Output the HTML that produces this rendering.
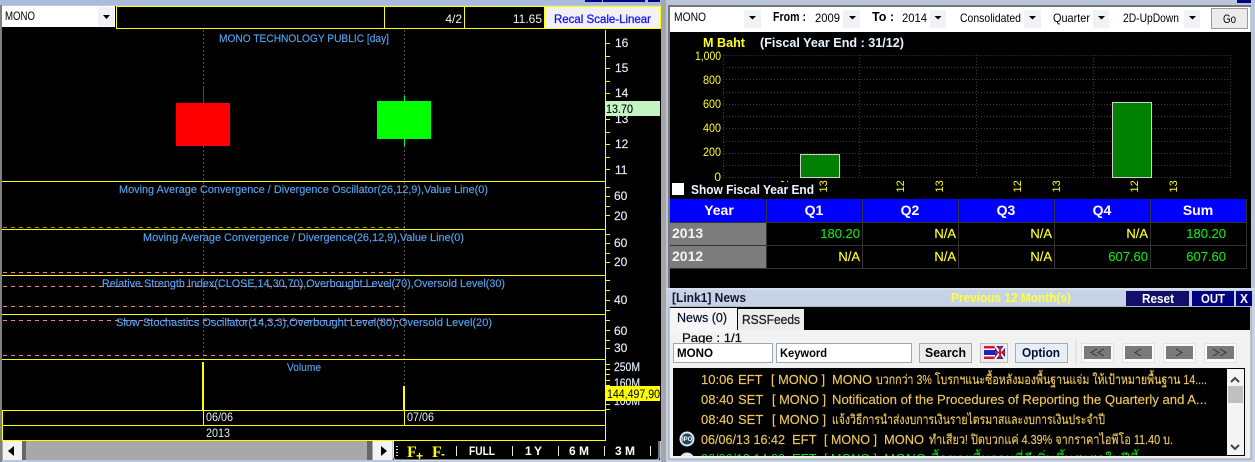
<!DOCTYPE html>
<html><head><meta charset="utf-8"><title>MONO</title>
<style>
html,body{margin:0;padding:0;background:#b9c6dc;width:1255px;height:462px;overflow:hidden}
svg{display:block;position:absolute;left:0;top:0}
text{font-family:"Liberation Sans","Noto Sans CJK SC",sans-serif;white-space:pre}
.lb{font-size:11px;fill:#55a0f0;stroke:#55a0f0;stroke-width:.15}
.ax{font-size:12px;fill:#e4eef8;stroke:#e4eef8;stroke-width:.15}
.cb{font-size:12px;fill:#000}
.bd{font-size:13px;font-weight:bold;fill:#000}
.hd{font-size:14px;font-weight:bold;fill:#fff;text-anchor:middle}
.v{font-size:13px;text-anchor:end;stroke-width:.15}
.y{fill:#ffff20;stroke:#ffff20}.g{fill:#10e010;stroke:#10e010}
.n{font-size:13px;fill:#eec85c;stroke:#eec85c;stroke-width:.15}
.yt{font-size:12px;fill:#ffff20;text-anchor:end}
.tb{font-size:12px;font-weight:bold;fill:#fff}
.r{font-size:11px;fill:#ffff20}
</style></head><body>
<svg width="1255" height="462" viewBox="0 0 1255 462" xmlns="http://www.w3.org/2000/svg">
<defs><clipPath id="lst"><rect x="673" y="368" width="554" height="88"/></clipPath></defs>
<rect width="1255" height="462" fill="#b9c6dc"/>
<rect x="0" y="0" width="2" height="462" fill="#808080"/>
<rect x="661" y="0" width="5" height="462" fill="#a6a6a6"/>
<rect x="0" y="0" width="661" height="5" fill="#a9bcdc"/>
<rect x="585" y="0" width="17" height="2" fill="#000080"/><rect x="603" y="0" width="42" height="2" fill="#000080"/><rect x="648" y="0" width="12" height="2" fill="#000080"/>
<rect x="1237" y="0" width="14" height="3" fill="#000080"/>

<!-- LEFT PANEL -->
<rect x="2" y="6" width="659" height="435" fill="#000"/>
<rect x="2" y="6" width="113" height="21" fill="#fff"/>
<rect x="98" y="7" width="16" height="19" fill="#f0f1f5"/>
<path d="M103 15h7l-3.500 4z" fill="#000"/>
<text x="5" y="20" class="cb" textLength="30" lengthAdjust="spacingAndGlyphs">MONO</text>
<rect x="116.500" y="6.500" width="544" height="22" fill="#000" stroke="#ffff00"/>
<path d="M384.500 7v21M464.500 7v21M544.500 7v21" stroke="#ffff00"/>
<text x="462" y="23" text-anchor="end" font-size="12" fill="#eef2f6">4/2</text>
<text x="542" y="23" text-anchor="end" font-size="12" fill="#eef2f6">11.65</text>
<rect x="545" y="7" width="115" height="21" fill="#f2f2f6"/>
<text x="554" y="23" font-size="12" fill="#1414f0" stroke="#1414f0" stroke-width=".3" textLength="97" lengthAdjust="spacingAndGlyphs">Recal Scale-Linear</text>
<text x="219" y="42" class="lb" textLength="170" lengthAdjust="spacingAndGlyphs">MONO TECHNOLOGY PUBLIC [day]</text>

<path d="M203.500 30V362M404.500 30V386" stroke="#555" stroke-dasharray="2 2"/>
<path d="M203.500 88v15" stroke="#ff0000"/>
<rect x="176" y="103" width="54" height="43" fill="#ff0000"/>
<path d="M404.500 96v5M404.500 139v7" stroke="#00ff00"/>
<rect x="377" y="101" width="54" height="38" fill="#00ff00"/>

<!-- panel lines -->
<path d="M2 181.500H605M2 229.500H605M2 275.500H605M2 314.500H605M2 359.500H605" stroke="#ffff00"/>
<path d="M2 410.500H605M2 425.500H605M2 440.500H605M2.500 410v31M203.500 410v15M404.500 410v15M605.500 30V441" stroke="#ffff00" fill="none"/>
<path d="M3 227.500H405" stroke="#9a9a00" stroke-dasharray="4 4"/>
<path d="M3 272.500H405M3 286.500H405M3 306.500H405M3 320.500H405M3 355.500H405" stroke="#ff7f7f" stroke-dasharray="4 4"/>
<text x="119" y="193" class="lb" textLength="369" lengthAdjust="spacingAndGlyphs">Moving Average Convergence / Divergence Oscillator(26,12,9),Value Line(0)</text>
<text x="143" y="241" class="lb" textLength="321" lengthAdjust="spacingAndGlyphs">Moving Average Convergence / Divergence(26,12,9),Value Line(0)</text>
<text x="102" y="287" class="lb" textLength="403" lengthAdjust="spacingAndGlyphs">Relative Strength Index(CLOSE,14,30,70),Overbought Level(70),Oversold Level(30)</text>
<text x="116" y="326" class="lb" textLength="376" lengthAdjust="spacingAndGlyphs">Slow Stochastics Oscillator(14,3,3),Overbought Level(80),Oversold Level(20)</text>
<text x="287" y="371" class="lb" textLength="34" lengthAdjust="spacingAndGlyphs">Volume</text>
<rect x="202" y="362" width="2" height="48" fill="#ffff00"/>
<rect x="403" y="386" width="2" height="24" fill="#ffff00"/>
<text x="206" y="421" font-size="12" fill="#e0ecf8" textLength="27" lengthAdjust="spacingAndGlyphs">06/06</text>
<text x="407" y="421" font-size="12" fill="#e0ecf8" textLength="27" lengthAdjust="spacingAndGlyphs">07/06</text>
<text x="206" y="437" font-size="12" fill="#e0ecf8" textLength="24" lengthAdjust="spacingAndGlyphs">2013</text>

<!-- axis -->
<path d="M606 43.500h4M606 56.500h4M606 68.500h4M606 81.500h4M606 93.500h4M606 119.500h4M606 132.500h4M606 144.500h4M606 157.500h4M606 169.500h4M606 187.500h4M606 196.500h4M606 206.500h4M606 215.500h4M606 234.500h4M606 243.500h4M606 253.500h4M606 262.500h4M606 280.500h4M606 290.500h4M606 300.500h4M606 310.500h4M606 320.500h4M606 330.500h4M606 340.500h4M606 348.500h4M606 364.500h4M606 369.500h4M606 374.500h4M606 380.500h4M606 385.500h4M606 404.500h4M606 409.500h4" stroke="#ffff00"/>
<text x="615" y="47" class="ax">16</text><text x="615" y="72" class="ax">15</text><text x="615" y="97" class="ax">14</text>
<text x="615" y="123" class="ax">13</text><text x="615" y="148" class="ax">12</text><text x="615" y="174" class="ax">11</text>
<text x="614" y="200" class="ax">60</text><text x="614" y="220" class="ax">20</text>
<text x="614" y="247" class="ax">60</text><text x="614" y="266" class="ax">20</text>
<text x="614" y="304" class="ax">40</text>
<text x="614" y="335" class="ax">60</text><text x="614" y="352" class="ax">30</text>
<text x="614" y="371" class="ax" textLength="26" lengthAdjust="spacingAndGlyphs">250M</text><text x="614" y="387" class="ax" textLength="26" lengthAdjust="spacingAndGlyphs">160M</text>
<text x="614" y="405" class="ax" textLength="26" lengthAdjust="spacingAndGlyphs">100M</text>
<rect x="606" y="101" width="54" height="15" fill="#c4f4c4"/>
<text x="606" y="113" font-size="12" fill="#000" stroke="#000" stroke-width=".1" textLength="27" lengthAdjust="spacingAndGlyphs">13.70</text>
<rect x="606" y="386" width="54" height="15" fill="#ffff00"/>
<text x="607" y="398" font-size="12" fill="#000" textLength="53" lengthAdjust="spacingAndGlyphs">144,497,90</text>

<!-- scrollbar + toolbar -->
<rect x="2" y="441" width="390" height="19" fill="#a8a8a8"/>
<rect x="3" y="441" width="19" height="19" fill="#f2f2f2"/>
<rect x="22" y="441" width="4" height="19" fill="#666"/>
<path d="M14 446v10l-6-5z" fill="#000"/>
<rect x="367" y="441" width="5" height="19" fill="#666"/>
<rect x="373" y="441" width="19" height="19" fill="#f2f2f2"/>
<path d="M381 446v10l6-5z" fill="#000"/>
<rect x="393" y="441" width="267" height="19" fill="#000"/>
<path d="M393.500 441v16q0 3 3 3H656q3 0 3-3V441" fill="none" stroke="#e8e8e8"/>
<path d="M397 446v1M397 449v1M397 452v1M397 455v1" stroke="#ddd" stroke-width="2"/>
<text x="407" y="457" style="font-family:'Liberation Serif',serif;font-size:16px;font-weight:bold;fill:#ffff00">F</text><text x="416" y="460" style="font-size:12px;font-weight:bold;fill:#ffff00">+</text>
<text x="432" y="457" style="font-family:'Liberation Serif',serif;font-size:16px;font-weight:bold;fill:#ffff00">F</text><text x="441" y="458" style="font-size:12px;font-weight:bold;fill:#ffff00">-</text>
<path d="M456.500 446v10M512.500 446v10M558.500 446v10M604.500 446v10M650.500 446v10" stroke="#e8e8e8"/>
<text x="469" y="455" class="tb" textLength="26" lengthAdjust="spacingAndGlyphs">FULL</text>
<text x="525" y="455" class="tb" textLength="17" lengthAdjust="spacing">1 Y</text>
<text x="569" y="455" class="tb" textLength="20" lengthAdjust="spacing">6 M</text>
<text x="615" y="455" class="tb" textLength="20" lengthAdjust="spacing">3 M</text>

<!-- RIGHT PANEL -->
<rect x="669" y="5" width="582" height="2" fill="#777"/>
<rect x="668" y="5" width="2" height="283" fill="#777"/>
<rect x="670" y="7" width="580" height="25" fill="#fff"/>
<g fill="#f1f2f6">
<rect x="744" y="10" width="17" height="18"/><rect x="843" y="10" width="17" height="18"/><rect x="930" y="10" width="16" height="18"/>
<rect x="1024" y="10" width="17" height="18"/><rect x="1093" y="10" width="16" height="18"/><rect x="1184" y="10" width="16" height="18"/></g>
<path d="M749 16h7l-3.500 3.500zM849 16h7l-3.500 3.500zM934.500 16h7l-3.500 3.500zM1029 16h7l-3.500 3.500zM1098 16h7l-3.500 3.500zM1189 16h7l-3.500 3.500z" fill="#000"/>
<text x="674" y="21" class="cb" textLength="32" lengthAdjust="spacingAndGlyphs">MONO</text>
<text x="773" y="21" class="bd" textLength="33" lengthAdjust="spacingAndGlyphs">From :</text>
<text x="815" y="22" class="cb" textLength="25" lengthAdjust="spacingAndGlyphs">2009</text>
<text x="872" y="21" class="bd" textLength="22" lengthAdjust="spacingAndGlyphs">To :</text>
<text x="902" y="22" class="cb" textLength="25" lengthAdjust="spacingAndGlyphs">2014</text>
<text x="960" y="22" class="cb" textLength="61" lengthAdjust="spacingAndGlyphs">Consolidated</text>
<text x="1053" y="22" class="cb" textLength="37" lengthAdjust="spacingAndGlyphs">Quarter</text>
<text x="1123" y="22" class="cb" textLength="56" lengthAdjust="spacingAndGlyphs">2D-UpDown</text>
<rect x="1211.500" y="8.500" width="36" height="20" fill="#ebebeb" stroke="#999"/>
<text x="1223" y="23" class="cb" textLength="13" lengthAdjust="spacingAndGlyphs">Go</text>

<rect x="670" y="32" width="581" height="256" fill="#000"/>
<text x="703" y="47" font-size="13" font-weight="bold" fill="#ffff20" textLength="42" lengthAdjust="spacingAndGlyphs">M Baht</text>
<text x="760" y="47" font-size="13" font-weight="bold" fill="#e8f4ff" textLength="144" lengthAdjust="spacingAndGlyphs">(Fiscal Year End : 31/12)</text>
<text x="721" y="60" class="yt" textLength="26" lengthAdjust="spacingAndGlyphs">1,000</text><text x="721" y="84" class="yt" textLength="18" lengthAdjust="spacingAndGlyphs">800</text><text x="721" y="108" class="yt" textLength="18" lengthAdjust="spacingAndGlyphs">600</text>
<text x="721" y="132" class="yt" textLength="18" lengthAdjust="spacingAndGlyphs">400</text><text x="721" y="156" class="yt" textLength="18" lengthAdjust="spacingAndGlyphs">200</text><text x="721" y="181" class="yt">0</text>
<path d="M723.500 55.500H1231M723 67.500H1231M723 79.500H1231M723 92.500H1231M723 104.500H1231M723 116.500H1231M723 128.500H1231M723 141.500H1231M723 153.500H1231M723 165.500H1231M723 177.500H1231M723.500 55V178M859.500 55V178M976.500 55V178M1093.500 55V178M1230.500 55V178" stroke="#3c3c3c" stroke-dasharray="1 2" fill="none"/>
<rect x="800.500" y="154.500" width="39" height="23" fill="#008000" stroke="#d0d0d0"/>
<rect x="1112.500" y="102.500" width="39" height="75" fill="#008000" stroke="#d0d0d0"/>
<text transform="translate(827,192.500) rotate(-90)" class="r">13</text>
<text transform="translate(788,192.500) rotate(-90)" class="r">12</text>
<text transform="translate(904,192.500) rotate(-90)" class="r">12</text>
<text transform="translate(943,192.500) rotate(-90)" class="r">13</text>
<text transform="translate(1021,192.500) rotate(-90)" class="r">12</text>
<text transform="translate(1060,192.500) rotate(-90)" class="r">13</text>
<text transform="translate(1138,192.500) rotate(-90)" class="r">12</text>
<text transform="translate(1177,192.500) rotate(-90)" class="r">13</text>
<rect x="670" y="182" width="145" height="16" fill="#000"/>
<rect x="672" y="183" width="12" height="12" fill="#fff"/>
<text x="691" y="194" font-size="13" font-weight="bold" fill="#eef4ff" textLength="123" lengthAdjust="spacingAndGlyphs">Show Fiscal Year End</text>

<!-- table -->
<rect x="670" y="199" width="576" height="23" fill="#0000ff"/>
<rect x="670" y="223" width="96" height="45" fill="#7c7c7c"/>
<path d="M766.500 199V269M862.500 199V269M958.500 199V269M1054.500 199V269M1150.500 199V269M1246.500 199V269M670 222.500H1247M670 245.500H1247M670 268.500H1247" stroke="#333"/>
<text x="719" y="215" class="hd">Year</text><text x="814" y="215" class="hd">Q1</text><text x="910" y="215" class="hd">Q2</text>
<text x="1006" y="215" class="hd">Q3</text><text x="1102" y="215" class="hd">Q4</text><text x="1198" y="215" class="hd">Sum</text>
<text x="672" y="238" font-size="14" font-weight="bold" fill="#f4f4f4">2013</text>
<text x="672" y="261" font-size="14" font-weight="bold" fill="#f4f4f4">2012</text>
<text x="860" y="238" class="v g">180.20</text><text x="956" y="238" class="v y">N/A</text><text x="1052" y="238" class="v y">N/A</text><text x="1148" y="238" class="v y">N/A</text><text x="1226" y="238" class="v g">180.20</text>
<text x="860" y="261" class="v y">N/A</text><text x="956" y="261" class="v y">N/A</text><text x="1052" y="261" class="v y">N/A</text><text x="1148" y="261" class="v g">607.60</text><text x="1226" y="261" class="v g">607.60</text>

<!-- NEWS -->
<rect x="666" y="288" width="589" height="174" fill="#c6d3e6"/>
<rect x="666" y="288" width="589" height="2" fill="#d8dde6"/>
<text x="672" y="302" font-size="13" font-weight="bold" fill="#101830" textLength="74" lengthAdjust="spacingAndGlyphs">[Link1] News</text>
<text x="951" y="302" font-size="13" font-weight="bold" fill="#ffff3c" textLength="120" lengthAdjust="spacingAndGlyphs">Previous 12 Month(s)</text>
<rect x="1126" y="291" width="63" height="15" fill="#10106a"/>
<rect x="1192" y="291" width="42" height="15" fill="#000080"/>
<rect x="1236" y="291" width="16" height="15" fill="#000080"/>
<text x="1142" y="303" font-size="13" font-weight="bold" fill="#fff" textLength="32" lengthAdjust="spacingAndGlyphs">Reset</text>
<text x="1201" y="303" font-size="13" font-weight="bold" fill="#fff" textLength="24" lengthAdjust="spacingAndGlyphs">OUT</text>
<text x="1240" y="303" font-size="13" font-weight="bold" fill="#fff" textLength="8" lengthAdjust="spacingAndGlyphs">X</text>
<rect x="669" y="307" width="582" height="152" fill="#f2f2f2" stroke="#999"/>
<rect x="670" y="307" width="580" height="23" fill="#000"/>
<rect x="670" y="308" width="67" height="24" fill="#f6f6f6"/>
<rect x="738" y="309" width="66" height="21" fill="#ececec"/>
<text x="677" y="322" font-size="13" fill="#001030" stroke="#001030" stroke-width=".2" textLength="50" lengthAdjust="spacingAndGlyphs">News (0)</text>
<text x="742" y="324" font-size="13" fill="#202020" stroke="#202020" stroke-width=".3" textLength="58" lengthAdjust="spacingAndGlyphs">RSSFeeds</text>
<text x="682" y="342" font-size="12" fill="#000" stroke="#000" stroke-width=".2" textLength="60" lengthAdjust="spacingAndGlyphs">Page : 1/1</text>
<rect x="673.500" y="343.500" width="99" height="19" fill="#fff" stroke="#9aa8b8"/>
<rect x="776.500" y="343.500" width="135" height="19" fill="#fff" stroke="#9aa8b8"/>
<text x="677" y="357" font-size="12" font-weight="bold" fill="#000" textLength="36" lengthAdjust="spacingAndGlyphs">MONO</text>
<text x="780" y="357" font-size="12" font-weight="bold" fill="#000" textLength="47" lengthAdjust="spacingAndGlyphs">Keyword</text>
<rect x="919.500" y="343.500" width="52" height="19" fill="#ececec" stroke="#aaa"/>
<text x="925" y="357" font-size="13" font-weight="bold" fill="#000" textLength="41" lengthAdjust="spacingAndGlyphs">Search</text>
<rect x="980.500" y="343.500" width="27" height="19" fill="#ececec" stroke="#bbb"/>
<rect x="984" y="346" width="11" height="13" fill="#fff"/><rect x="984" y="346" width="11" height="2.500" fill="#e01030"/><rect x="984" y="356.500" width="11" height="2.500" fill="#e01030"/><rect x="984" y="350" width="11" height="5" fill="#2020c0"/>
<rect x="995" y="346" width="10" height="13" fill="#203080"/><path d="M995 346l10 13M1005 346l-10 13" stroke="#fff" stroke-width="2"/><path d="M1000 346v13M995 352.500h10" stroke="#e01030" stroke-width="2"/>
<rect x="1015.500" y="343.500" width="52" height="19" fill="#e8eef6" stroke="#aaa"/>
<text x="1022" y="357" font-size="13" font-weight="bold" fill="#001030" textLength="38" lengthAdjust="spacingAndGlyphs">Option</text>
<rect x="1075" y="339" width="2" height="25" fill="#e4e4e4"/>
<g fill="#fafafa" stroke="#e2e2e2"><rect x="1081.500" y="343.500" width="32" height="19"/><rect x="1122.500" y="343.500" width="32" height="19"/><rect x="1163.500" y="343.500" width="32" height="19"/><rect x="1204.500" y="343.500" width="32" height="19"/></g>
<g fill="#7a7a7a"><rect x="1084" y="346" width="27" height="13"/><rect x="1125" y="346" width="27" height="13"/><rect x="1166" y="346" width="27" height="13"/><rect x="1207" y="346" width="27" height="13"/></g>
<g fill="none" stroke="#333"><path d="M1097 349l-6 3.500 6 3.500M1104 349l-6 3.500 6 3.500M1141 349l-6 3.500 6 3.500M1176 349l6 3.500-6 3.500M1213 349l6 3.500-6 3.500M1220 349l6 3.500-6 3.500"/></g>
<rect x="673" y="368" width="572" height="88" fill="#000"/>
<rect x="1227" y="369" width="17" height="86" fill="#f4f4f4"/>
<rect x="1228" y="386" width="15" height="17" fill="#c0c0c0"/>
<path d="M1231 382l4-4 4 4M1231 445l4 4 4-4" fill="none" stroke="#444" stroke-width="2"/>
<g clip-path="url(#lst)">
<text x="701" y="384" class="n">10:06</text><text x="738" y="384" class="n">EFT</text><text x="771" y="384" class="n" textLength="54" lengthAdjust="spacingAndGlyphs">[ MONO ]</text>
<text x="832" y="384" class="n" textLength="40" lengthAdjust="spacingAndGlyphs">MONO</text>
<text x="876" y="384" class="n" textLength="331" lengthAdjust="spacingAndGlyphs">บวกกว่า 3% โบรกฯแนะซื้อหลังมองพื้นฐานแจ่ม ให้เป้าหมายพื้นฐาน 14....</text>
<text x="701" y="404" class="n">08:40</text><text x="738" y="404" class="n">SET</text><text x="772" y="404" class="n" textLength="54" lengthAdjust="spacingAndGlyphs">[ MONO ]</text>
<text x="832" y="404" class="n" textLength="375" lengthAdjust="spacingAndGlyphs">Notification of the Procedures of Reporting the Quarterly and A...</text>
<text x="701" y="424" class="n">08:40</text><text x="738" y="424" class="n">SET</text><text x="772" y="424" class="n" textLength="54" lengthAdjust="spacingAndGlyphs">[ MONO ]</text>
<text x="832" y="424" class="n" textLength="273" lengthAdjust="spacingAndGlyphs">แจ้งวิธีการนำส่งงบการเงินรายไตรมาสและงบการเงินประจำปี</text>
<text x="701" y="444" class="n" textLength="84" lengthAdjust="spacingAndGlyphs">06/06/13 16:42</text><text x="792" y="444" class="n">EFT</text><text x="824" y="444" class="n" textLength="53" lengthAdjust="spacingAndGlyphs">[ MONO ]</text>
<text x="884" y="444" class="n" textLength="40" lengthAdjust="spacingAndGlyphs">MONO</text>
<text x="929" y="444" class="n" textLength="244" lengthAdjust="spacingAndGlyphs">ทำเสียว! ปิดบวกแค่ 4.39% จากราคาไอพีโอ 11.40 บ.</text>
<text x="701" y="463" font-size="13" fill="#10e010" textLength="84" lengthAdjust="spacingAndGlyphs">06/06/13 14:00</text><text x="792" y="463" font-size="13" fill="#10e010">EFT</text><text x="824" y="463" font-size="13" fill="#10e010" textLength="53" lengthAdjust="spacingAndGlyphs">[ MONO ]</text>
<text x="884" y="463" font-size="13" fill="#10e010" textLength="255" lengthAdjust="spacingAndGlyphs">MONO ซื้อขายพื้นฐานที่ดีเพิ่มขึ้นสูงสุดในปีนี้</text>
<circle cx="687" cy="439" r="7.500" fill="#d8e8f4"/><circle cx="687" cy="439" r="5.500" fill="#204868"/>
<text x="682" y="441" style="font-size:6px;font-weight:bold;fill:#fff">IPO</text>
<circle cx="687" cy="460" r="7.500" fill="#d8e8f4"/>
</g>
</svg>
</body></html>
